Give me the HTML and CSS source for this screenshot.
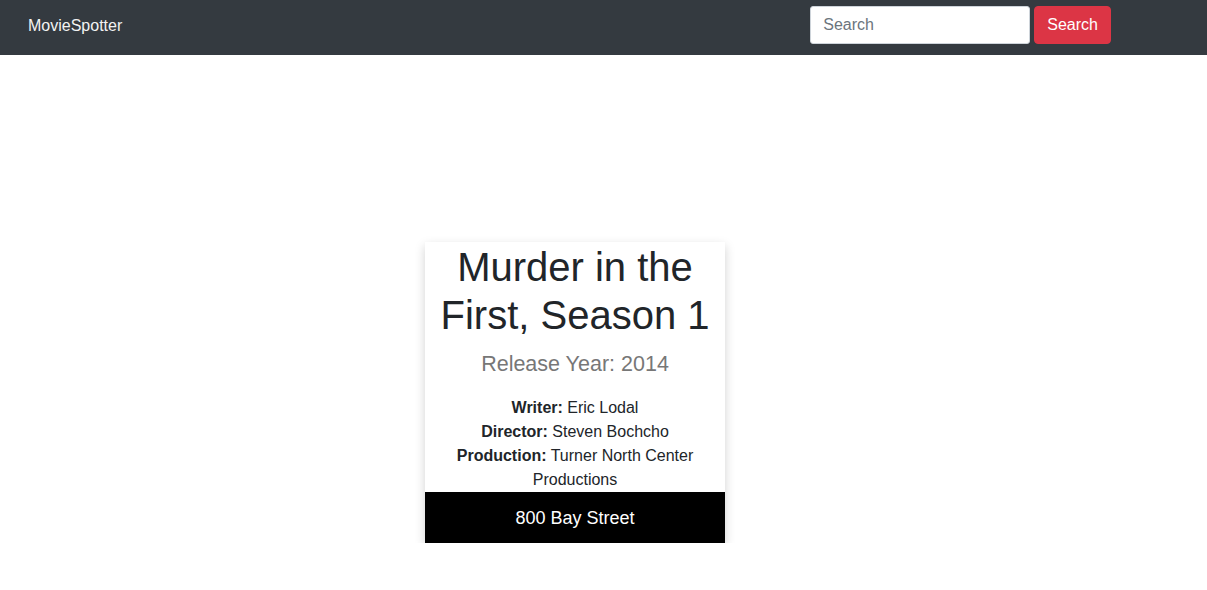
FILE: index.html
```html
<!DOCTYPE html>
<html lang="en">
<head>
<meta charset="utf-8">
<title>MovieSpotter</title>
<link rel="stylesheet" href="styles.css">
</head>
<body>
<nav class="navbar">
  <a class="brand" href="#">MovieSpotter</a>
  <form class="search">
    <input class="search-input" type="text" placeholder="Search">
    <button class="search-btn" type="button">Search</button>
  </form>
</nav>
<main class="main">
  <div class="card">
    <h1 class="title">Murder in the First, Season 1</h1>
    <h5 class="subtitle">Release Year: 2014</h5>
    <div class="details">
      <div><b>Writer:</b> Eric Lodal</div>
      <div><b>Director:</b> Steven Bochcho</div>
      <div><b>Production:</b> Turner North Center Productions</div>
    </div>
    <div class="footer">800 Bay Street</div>
  </div>
</main>
</body>
</html>
```
FILE: styles.css
```css
* { box-sizing: border-box; }
html, body { margin: 0; padding: 0; }
body {
  font-family: "Liberation Sans", Arial, sans-serif;
  font-size: 16px;
  line-height: 1.5;
  color: #212529;
  background: #fff;
}
.navbar {
  height: 55px;
  background: #343a40;
  display: flex;
  align-items: center;
  justify-content: space-between;
  padding: 6px 96px 11px 28px;
}
.brand {
  color: #f2f2f2;
  text-decoration: none;
  font-size: 16px;
  margin-top: 2px;
}
.search {
  display: flex;
  gap: 4px;
  margin: 0;
}
.search-input {
  width: 220px;
  height: 38px;
  padding: 6px 12px;
  font: 16px "Liberation Sans", Arial, sans-serif;
  color: #495057;
  border: 1px solid #ced4da;
  border-radius: 3px;
  background: #fff;
  outline: none;
}
.search-input::placeholder { color: #6c757d; }
.search-btn {
  height: 38px;
  padding: 6px 12px;
  font: 16px "Liberation Sans", Arial, sans-serif;
  color: #fff;
  background: #dc3545;
  border: 1px solid #dc3545;
  border-radius: 4px;
}
.main {
  padding: 187px 0 0 425px;
}
.card {
  width: 300px;
  background: #fff;
  box-shadow: 0 4px 10px rgba(0, 0, 0, 0.18);
  text-align: center;
  padding-top: 1px;
}
.title {
  font-size: 40px;
  font-weight: 400;
  line-height: 48px;
  margin: 0;
  padding: 0 12px;
}
.subtitle {
  font-size: 21.5px;
  font-weight: 400;
  line-height: 26px;
  color: #777;
  margin: 12px 0 0;
}
.details {
  margin-top: 19px;
  padding: 0 20px;
  line-height: 24px;
}
.details b { font-weight: 700; }
.footer {
  background: #000;
  color: #fff;
  font-size: 18px;
  line-height: 27px;
  padding: 13px 0 11px;
}
```
